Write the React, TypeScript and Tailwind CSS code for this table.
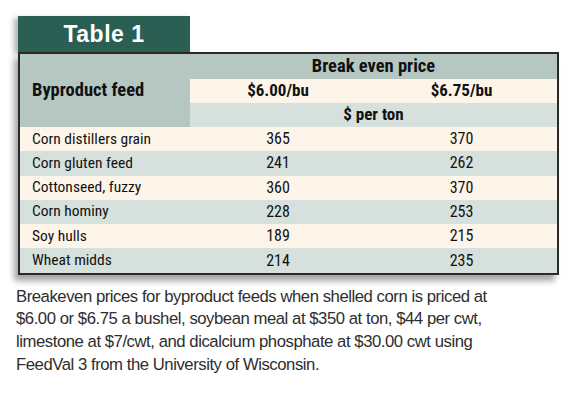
const rows = [
  { name: "Corn distillers grain", a: "365", b: "370" },
  { name: "Corn gluten feed", a: "241", b: "262" },
  { name: "Cottonseed, fuzzy", a: "360", b: "370" },
  { name: "Corn hominy", a: "228", b: "253" },
  { name: "Soy hulls", a: "189", b: "215" },
  { name: "Wheat midds", a: "214", b: "235" },
];

const narrow = "font-['Liberation_Sans_Narrow','Roboto_Condensed','DejaVu_Sans_Condensed',sans-serif]";

export default function App() {
  return (
    <div className="w-[575px] h-[405px] bg-white pl-[18px] pt-[16px] font-['Liberation_Sans',Arial,sans-serif]">
      {/* Tab */}
      <div className="w-[172px] h-[36px] bg-[#2b5f53] flex items-center justify-center shadow-[-4px_2px_5px_rgba(0,0,0,0.3)]">
        <span className="text-white text-[23px] font-bold tracking-[0.5px] leading-none">Table 1</span>
      </div>

      {/* Table */}
      <div className={`w-[541px] border-2 border-[#2a2a2a] shadow-[-4px_6px_6px_rgba(0,0,0,0.35)] ${narrow} text-[#111]`}>
        <div className="grid grid-cols-[170px_176px_1fr]">
          <div className="row-span-3 bg-[#b6c7c1] flex items-center pl-[12px] text-[18.5px] font-bold">
            Byproduct feed
          </div>
          <div className="col-span-2 h-[25px] bg-[#b6c7c1] flex items-center justify-center text-[18.5px] font-bold">
            Break even price
          </div>
          <div className="h-[24px] bg-[#fdf5e9] flex items-center justify-center text-[17px] font-bold">$6.00/bu</div>
          <div className="h-[24px] bg-[#fdf5e9] flex items-center justify-center text-[17px] font-bold">$6.75/bu</div>
          <div className="col-span-2 h-[24px] bg-[#d6e0dd] flex items-center justify-center text-[17px] font-bold">
            $ per ton
          </div>

          {rows.map((r, i) => {
            const bg = i % 2 === 0 ? "bg-[#fdf5e9]" : "bg-[#d6e0dd]";
            return [
              <div key={r.name} className={`${bg} h-[24.3px] flex items-center pl-[12px] text-[15.5px]`}>{r.name}</div>,
              <div key={r.name + "a"} className={`${bg} h-[24.3px] flex items-center justify-center text-[16px]`}>{r.a}</div>,
              <div key={r.name + "b"} className={`${bg} h-[24.3px] flex items-center justify-center text-[16px]`}>{r.b}</div>,
            ];
          })}
        </div>
      </div>

      {/* Caption */}
      <p className="mt-[11px] -ml-[2px] w-[500px] text-[16.7px] tracking-[-0.45px] leading-[22.6px] text-[#2e2e2e]">
        Breakeven prices for byproduct feeds when shelled corn is priced at $6.00 or $6.75 a bushel, soybean meal at $350 at ton, $44 per cwt, limestone at $7/cwt, and dicalcium phosphate at $30.00 cwt using FeedVal 3 from the University of Wisconsin.
      </p>
    </div>
  );
}
